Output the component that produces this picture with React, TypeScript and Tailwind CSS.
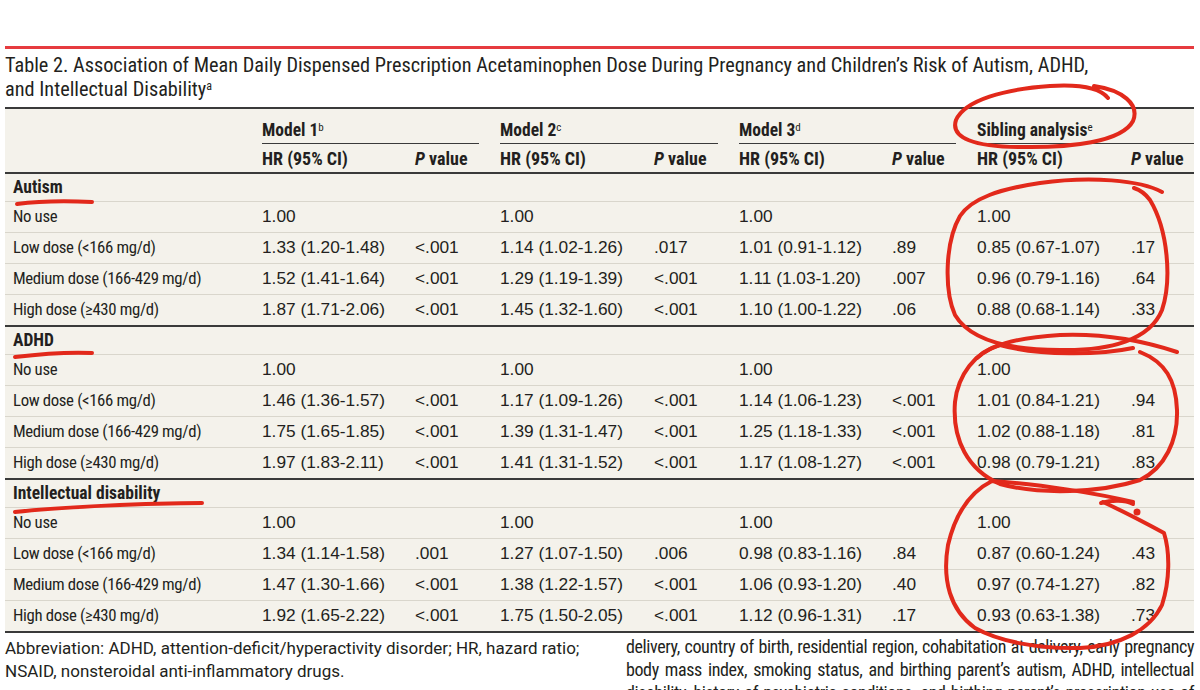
import React from "react";

const COLS =
  "grid grid-cols-[257px_153px_85px_154px_85px_153px_85px_154px_1fr]";

type Row = { label: string; cells: [string, string][] };
type Section = { title: string; rows: Row[] };

const NOUSE: [string, string][] = [
  ["1.00", ""],
  ["1.00", ""],
  ["1.00", ""],
  ["1.00", ""],
];

const sections: Section[] = [
  {
    title: "Autism",
    rows: [
      { label: "No use", cells: NOUSE },
      {
        label: "Low dose (<166 mg/d)",
        cells: [
          ["1.33 (1.20-1.48)", "<.001"],
          ["1.14 (1.02-1.26)", ".017"],
          ["1.01 (0.91-1.12)", ".89"],
          ["0.85 (0.67-1.07)", ".17"],
        ],
      },
      {
        label: "Medium dose (166-429 mg/d)",
        cells: [
          ["1.52 (1.41-1.64)", "<.001"],
          ["1.29 (1.19-1.39)", "<.001"],
          ["1.11 (1.03-1.20)", ".007"],
          ["0.96 (0.79-1.16)", ".64"],
        ],
      },
      {
        label: "High dose (\u2265430 mg/d)",
        cells: [
          ["1.87 (1.71-2.06)", "<.001"],
          ["1.45 (1.32-1.60)", "<.001"],
          ["1.10 (1.00-1.22)", ".06"],
          ["0.88 (0.68-1.14)", ".33"],
        ],
      },
    ],
  },
  {
    title: "ADHD",
    rows: [
      { label: "No use", cells: NOUSE },
      {
        label: "Low dose (<166 mg/d)",
        cells: [
          ["1.46 (1.36-1.57)", "<.001"],
          ["1.17 (1.09-1.26)", "<.001"],
          ["1.14 (1.06-1.23)", "<.001"],
          ["1.01 (0.84-1.21)", ".94"],
        ],
      },
      {
        label: "Medium dose (166-429 mg/d)",
        cells: [
          ["1.75 (1.65-1.85)", "<.001"],
          ["1.39 (1.31-1.47)", "<.001"],
          ["1.25 (1.18-1.33)", "<.001"],
          ["1.02 (0.88-1.18)", ".81"],
        ],
      },
      {
        label: "High dose (\u2265430 mg/d)",
        cells: [
          ["1.97 (1.83-2.11)", "<.001"],
          ["1.41 (1.31-1.52)", "<.001"],
          ["1.17 (1.08-1.27)", "<.001"],
          ["0.98 (0.79-1.21)", ".83"],
        ],
      },
    ],
  },
  {
    title: "Intellectual disability",
    rows: [
      { label: "No use", cells: NOUSE },
      {
        label: "Low dose (<166 mg/d)",
        cells: [
          ["1.34 (1.14-1.58)", ".001"],
          ["1.27 (1.07-1.50)", ".006"],
          ["0.98 (0.83-1.16)", ".84"],
          ["0.87 (0.60-1.24)", ".43"],
        ],
      },
      {
        label: "Medium dose (166-429 mg/d)",
        cells: [
          ["1.47 (1.30-1.66)", "<.001"],
          ["1.38 (1.22-1.57)", "<.001"],
          ["1.06 (0.93-1.20)", ".40"],
          ["0.97 (0.74-1.27)", ".82"],
        ],
      },
      {
        label: "High dose (\u2265430 mg/d)",
        cells: [
          ["1.92 (1.65-2.22)", "<.001"],
          ["1.75 (1.50-2.05)", "<.001"],
          ["1.12 (0.96-1.31)", ".17"],
          ["0.93 (0.63-1.38)", ".73"],
        ],
      },
    ],
  },
];

const groups: { name: string; sup: string; last?: boolean }[] = [
  { name: "Model 1", sup: "b" },
  { name: "Model 2", sup: "c" },
  { name: "Model 3", sup: "d" },
  { name: "Sibling analysis", sup: "e", last: true },
];

function Annotations() {
  return (
    <svg
      className="absolute left-0 top-0 pointer-events-none"
      width={1200}
      height={690}
      viewBox="0 0 1200 690"
      fill="none"
      stroke="#e2291b"
      strokeWidth={4}
      strokeLinecap="round"
      strokeLinejoin="round"
    >
      <path d="M1108,98 C1100,88 1082,84 1050,86 C1005,89 965,100 956,120 C950,138 975,147 1020,147 C1070,148 1122,142 1133,121 C1140,104 1122,90 1094,86" />
      <path d="M17,204 C40,201 70,201 92,202" />
      <path d="M15,357 C40,354 70,352 92,353" />
      <path d="M15,512 C60,507 150,503 202,503" />
      <path d="M1162,192 C1140,180 1090,176 1040,183 C1000,189 972,198 960,216 C945,242 944,290 955,315 C970,340 1010,350 1060,350 C1110,351 1150,340 1162,310 C1172,280 1168,230 1150,200 C1145,193 1140,190 1134,188" />
      <path d="M977,358 C990,346 1012,338 1060,335 C1110,333 1150,343 1177,352" />
      <path d="M1133,348 C1100,355 1040,356 1000,345 C975,352 958,375 955,402 C952,440 968,470 1000,484 C1040,495 1100,493 1140,480 C1165,468 1178,440 1177,410 C1176,380 1165,362 1140,352" />
      <path d="M1101,503 C1112,500 1125,500 1133,504" />
      <circle cx={1137} cy={512} r={1.5} fill="#e2291b" />
      <path d="M1133,502 C1100,494 1040,484 992,481 C970,492 955,515 948,545 C942,580 950,610 975,628 C1000,642 1040,649 1080,648 C1120,646 1150,630 1162,605 C1170,580 1170,552 1164,533 C1140,520 1116,508 1103,502" />
    </svg>
  );
}

const NUM = "[font-family:'Liberation_Sans',Arial,sans-serif] [font-stretch:normal] text-[17.3px]";

export default function App() {
  return (
    <div className="relative w-[1200px] h-[690px] overflow-hidden bg-white text-[#231f20] [font-family:'Roboto_Condensed',sans-serif]">
      <div className="pt-[46px] pl-[5px] pr-[6px]">
        <div className="h-[3px] bg-[#e63b3f]" />
        <div className="mt-[4px] text-[20.3px] leading-[24px] whitespace-nowrap">
          Table 2. Association of Mean Daily Dispensed Prescription Acetaminophen Dose During Pregnancy and Children’s Risk of Autism, ADHD,
          <br />
          and Intellectual Disability
          <sup className="text-[12px]">a</sup>
        </div>

        <div className="mt-[6px] bg-[#f4f2eb] border-t-2 border-[#3a3a3a] border-b-2 border-b-[#3a3a3a]">
          <div className={COLS + " h-[35px] text-[17.5px]"}>
            <div />
            {groups.map((g) => (
              <div
                key={g.name}
                className={
                  "col-span-2 flex items-center pt-[8px] font-bold border-b border-[#3a3a3a] whitespace-nowrap " +
                  (g.last ? "" : "mr-[21px]")
                }
              >
                <span>
                  {g.name}
                  <sup className="text-[11px] font-normal">{g.sup}</sup>
                </span>
              </div>
            ))}
          </div>
          <div className={COLS + " h-[28px] pt-[1px] items-center font-bold whitespace-nowrap text-[18px]"}>
            <div />
            {groups.map((g) => (
              <React.Fragment key={g.name}>
                <div>HR (95% CI)</div>
                <div>
                  <i>P</i> value
                </div>
              </React.Fragment>
            ))}
          </div>
          {sections.map((s) => (
            <div key={s.title} className="border-t-2 border-[#3a3a3a]">
              <div className="h-[27px] flex items-center pl-[8px] font-bold text-[17.5px]">
                {s.title}
              </div>
              {s.rows.map((r) => (
                <div
                  key={r.label}
                  className={COLS + " h-[31px] items-center border-t border-[#d9d6cc] whitespace-nowrap"}
                >
                  <div className="pl-[8px] text-[16.8px] tracking-[-0.35px]">{r.label}</div>
                  {r.cells.map((c, i) => (
                    <React.Fragment key={i}>
                      <div className={NUM}>{c[0]}</div>
                      <div className={NUM}>{c[1]}</div>
                    </React.Fragment>
                  ))}
                </div>
              ))}
            </div>
          ))}
        </div>

        <div className="flex leading-[23px]">
          <div className="w-[600px] pt-[4px] text-[17px] [font-family:Roboto,sans-serif]">
            <div className="whitespace-nowrap">
              Abbreviation: ADHD, attention-deficit/hyperactivity disorder; HR, hazard ratio;
            </div>
            <div className="whitespace-nowrap">
              NSAID, nonsteroidal anti-inflammatory drugs.
            </div>
          </div>
          <div className="ml-auto w-[568px] pt-[2px] text-[18px] tracking-[-0.4px]">
            <div className="whitespace-nowrap [text-align-last:justify]">
              delivery, country of birth, residential region, cohabitation at delivery, early pregnancy
            </div>
            <div className="whitespace-nowrap [text-align-last:justify]">
              body mass index, smoking status, and birthing parent’s autism, ADHD, intellectual
            </div>
            <div className="whitespace-nowrap [text-align-last:justify]">
              disability, history of psychiatric conditions, and birthing parent’s prescription use of
            </div>
          </div>
        </div>
      </div>
      <Annotations />
    </div>
  );
}
